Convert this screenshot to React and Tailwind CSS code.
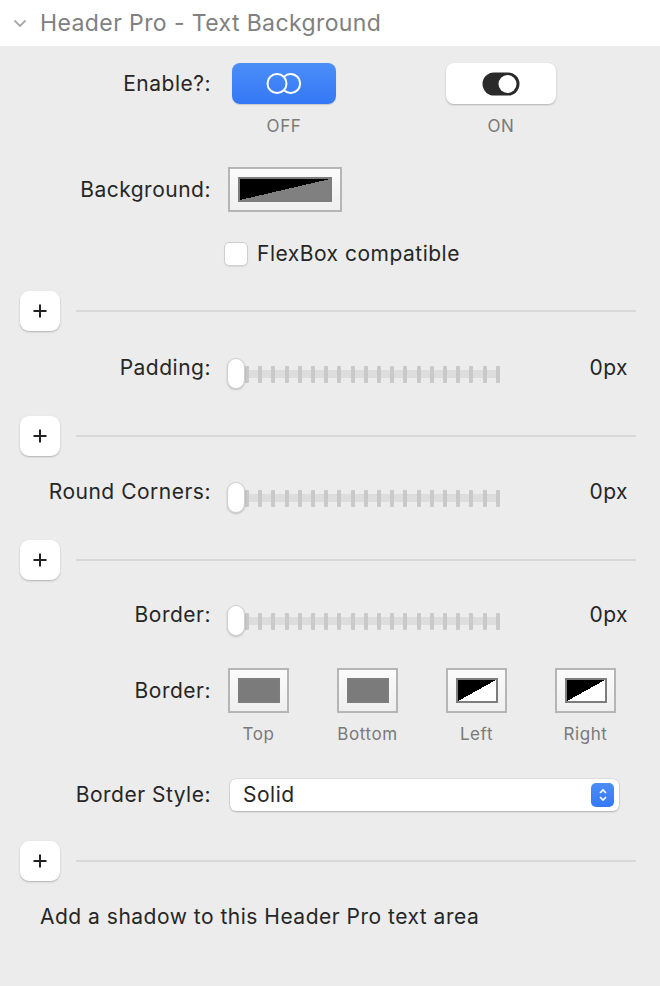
import React from 'react';

const font = { fontFamily: 'Inter, "Noto Sans", "Liberation Sans", sans-serif' };

function PlusRow({ className = '' }) {
  return (
    <div className={`flex items-center pl-[20px] pr-[24px] ${className}`}>
      <button className="w-[40px] h-[40px] bg-white rounded-[9px] shadow-[0_1px_2px_rgba(0,0,0,0.25)] flex items-center justify-center">
        <svg width="16" height="16" viewBox="0 0 16 16">
          <path d="M8 1.5v13M1.5 8h13" stroke="#222" strokeWidth="2" />
        </svg>
      </button>
      <div className="flex-1 ml-[16px] h-[2px] bg-[#d8d8d8]" />
    </div>
  );
}

function Slider() {
  const ticks = Array.from({ length: 20 });
  return (
    <div className="relative w-[274px] h-[31px] mt-[2px] ml-[15px]">
      <div className="absolute left-[19px] w-[255px] top-[12px] h-[8px] bg-[#dddddd] rounded-sm" />
      <div className="absolute left-[19px] w-[255px] top-[8px] h-[17px] flex justify-between">
        {ticks.map((_, i) => (
          <div key={i} className="w-[4px] h-full bg-[#c9c9c9] rounded-[1px]" />
        ))}
      </div>
      <div className="absolute left-[1px] top-0 w-[18px] h-[31px] bg-white rounded-full border border-[#d0d0d0] shadow-[0_1px_2px_rgba(0,0,0,0.2)]" />
    </div>
  );
}

function SliderRow({ label, className = '' }) {
  return (
    <div className={`flex items-start ${className}`}>
      <div className="w-[211px] text-right">{label}</div>
      <Slider />
      <div className="ml-auto pr-[32px]">0px</div>
    </div>
  );
}

function Swatch({ inner, outerW = 'w-[61px]', innerW = 'w-[42px]' }) {
  return (
    <div
      className={`${outerW} h-[45px] border-2 border-[#b5b5b5] bg-[linear-gradient(#fbfbfb,#efefef)] flex items-center justify-center`}
    >
      <div className={`${innerW} h-[25px] border-2 border-[#7d7d7d] ${inner}`} />
    </div>
  );
}

export default function App() {
  const borders = [
    { name: 'Top', inner: 'bg-[#7b7b7b]' },
    { name: 'Bottom', inner: 'bg-[#7b7b7b]' },
    { name: 'Left', inner: 'bg-[linear-gradient(to_bottom_right,#000_50%,#fff_50%)]' },
    { name: 'Right', inner: 'bg-[linear-gradient(to_bottom_right,#000_50%,#fff_50%)]' },
  ];

  return (
    <div
      className="w-[660px] h-[986px] bg-[#ececec] text-[#262626] text-[21px] leading-[24px] tracking-[0.5px] overflow-hidden"
      style={font}
    >
      {/* Header */}
      <div className="h-[46px] bg-white flex items-center">
        <svg className="ml-[13px]" width="14" height="10" viewBox="0 0 14 10">
          <path d="M1.5 2.5l5.5 5.5 5.5-5.5" stroke="#a8a8a8" strokeWidth="1.8" fill="none" />
        </svg>
        <div className="ml-[13px] text-[23px] tracking-[0.4px] text-[#808080]">Header Pro - Text Background</div>
      </div>

      {/* Enable */}
      <div className="flex items-start mt-[17px]">
        <div className="w-[211px] h-[41px] flex items-center justify-end">Enable?:</div>
        <div className="ml-[21px] w-[104px] flex flex-col items-center">
          <div className="w-[104px] h-[41px] rounded-[8px] bg-[linear-gradient(#4b8ef8,#3478f6)] shadow-[0_1px_1px_rgba(0,0,0,0.15)] flex items-center justify-center">
            <svg width="39" height="23" viewBox="0 0 39 23">
              <circle cx="12" cy="11.5" r="9.5" fill="none" stroke="#fff" strokeWidth="2" />
              <path d="M19 4.7A9.5 9.5 0 1 1 19 18.3" fill="none" stroke="#fff" strokeWidth="2" />
            </svg>
          </div>
          <div className="mt-[12px] text-[17px] leading-[20px] tracking-[0.6px] text-[#7a7a7a]">OFF</div>
        </div>
        <div className="ml-[110px] w-[110px] flex flex-col items-center">
          <div className="w-[110px] h-[41px] rounded-[8px] bg-white shadow-[0_1px_2px_rgba(0,0,0,0.25)] flex items-center justify-center">
            <svg width="38" height="24" viewBox="0 0 38 24">
              <rect x="0.5" y="0.5" width="37" height="23" rx="11.5" fill="#2a2a2a" />
              <circle cx="25.5" cy="12" r="9" fill="#fff" />
            </svg>
          </div>
          <div className="mt-[12px] text-[17px] leading-[20px] tracking-[0.6px] text-[#7a7a7a]">ON</div>
        </div>
      </div>

      {/* Background */}
      <div className="flex items-center mt-[31px]">
        <div className="w-[211px] text-right">Background:</div>
        <div className="ml-[17px]">
          <Swatch
            outerW="w-[114px]"
            innerW="w-[94px]"
            inner="bg-[linear-gradient(to_bottom_right,#000_50%,#808080_50%)]"
          />
        </div>
      </div>

      {/* FlexBox */}
      <div className="flex items-center mt-[30px] pl-[224px]">
        <div className="w-[24px] h-[24px] bg-white rounded-[5px] border border-[#cfcfcf] shadow-[0_1px_1px_rgba(0,0,0,0.08)]" />
        <div className="ml-[9px]">FlexBox compatible</div>
      </div>

      <PlusRow className="mt-[25px]" />
      <SliderRow label="Padding:" className="mt-[25px]" />
      <PlusRow className="mt-[27px]" />
      <SliderRow label="Round Corners:" className="mt-[24px]" />
      <PlusRow className="mt-[27px]" />
      <SliderRow label="Border:" className="mt-[23px]" />

      {/* Border sides */}
      <div className="flex items-start mt-[32px]">
        <div className="w-[211px] h-[45px] flex items-center justify-end">Border:</div>
        <div className="ml-[17px] flex gap-[48px]">
          {borders.map((b) => (
            <div key={b.name} className="w-[61px] flex flex-col items-center">
              <Swatch inner={b.inner} />
              <div className="mt-[11px] text-[17px] leading-[20px] tracking-[0.6px] text-[#7a7a7a]">{b.name}</div>
            </div>
          ))}
        </div>
      </div>

      {/* Border style */}
      <div className="flex items-center mt-[35px]">
        <div className="w-[211px] text-right">Border Style:</div>
        <div className="ml-[19px] w-[389px] h-[32px] bg-white rounded-[6px] shadow-[0_0_0_0.5px_rgba(0,0,0,0.12),0_1px_2px_rgba(0,0,0,0.2)] flex items-center pl-[13px] pr-[5px]">
          <div className="flex-1">Solid</div>
          <div className="w-[23px] h-[24px] rounded-[5px] bg-[linear-gradient(#4b8ef8,#3478f6)] flex items-center justify-center">
            <svg width="10" height="16" viewBox="0 0 10 16">
              <path d="M2 6l3-3 3 3M2 10l3 3 3-3" stroke="#fff" strokeWidth="1.6" fill="none" />
            </svg>
          </div>
        </div>
      </div>

      <PlusRow className="mt-[30px]" />

      <div className="mt-[24px] pl-[40px]">Add a shadow to this Header Pro text area</div>
    </div>
  );
}
